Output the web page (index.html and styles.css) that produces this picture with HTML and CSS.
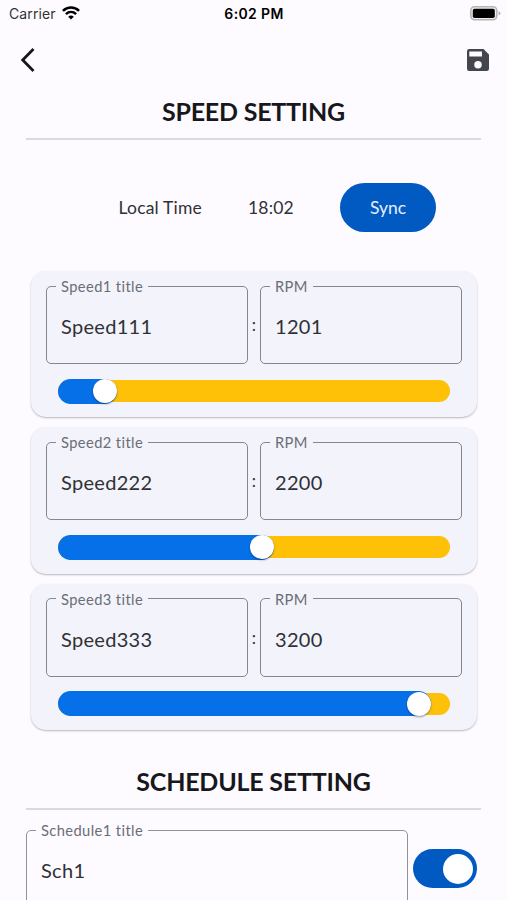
FILE: index.html
```html
<!DOCTYPE html>
<html lang="en">
<head>
<meta charset="utf-8">
<title>Speed Setting</title>
<link rel="stylesheet" href="styles.css">
</head>
<body>
<div class="status">
  <div class="carrier"><span>Carrier</span>
    <svg width="18" height="14" viewBox="0 0 18 14" fill="none" stroke="#000" stroke-width="2.5"><path d="M.9 4.9C5.6.4 12.4.4 17.1 4.9M3.900 8.100c3-2.800 7.200-2.800 10.200 0"/><path d="M9 13.600 6.200 10.700c1.700-1.500 3.900-1.500 5.600 0z" fill="#000" stroke="none"/></svg>
  </div>
  <div class="clock">6:02 PM</div>
  <svg class="battery" width="31" height="15" viewBox="0 0 31 15"><rect x=".8" y=".8" width="26" height="13" rx="3.8" fill="#eee" stroke="#b5b5b5" stroke-width="1.6"/><rect x="2.800" y="2.800" width="22" height="9.200" rx="1.800" fill="#000"/><path d="M28.600 5.200q1.800.7 1.800 2.100t-1.800 2.100z" fill="#aaa"/></svg>
</div>
<header class="toolbar">
  <svg width="16" height="26" viewBox="0 0 16 26" fill="none" stroke="#17181b" stroke-width="2.8"><path d="M13.5 2 2.700 13 13.500 24"/></svg>
  <svg class="save" width="24" height="24" viewBox="0 0 24 24"><path fill="#44464f" fill-rule="evenodd" d="M3.200 1h14.300L23 6.500v14.300a2.200 2.200 0 0 1-2.200 2.200H3.200A2.200 2.200 0 0 1 1 20.800V3.200A2.200 2.200 0 0 1 3.200 1zM3.300 3.400v5h12.700v-5zM12 13a3.750 3.750 0 1 0 0 7.500 3.750 3.750 0 0 0 0-7.500z"/></svg>
</header>
<main>
  <h1>SPEED SETTING</h1>
  <div class="sync-row"><span class="local">Local Time</span><span class="time">18:02</span><button class="sync">Sync</button></div>
  <section class="cards">
    <div class="card">
      <div class="fields"><fieldset><legend>Speed1 title</legend><span>Speed111</span></fieldset><span class="colon">:</span><fieldset><legend>RPM</legend><span>1201</span></fieldset></div>
      <div class="slider"><div class="active" style="width:59px"><i class="thumb"></i></div></div>
    </div>
    <div class="card">
      <div class="fields"><fieldset><legend>Speed2 title</legend><span>Speed222</span></fieldset><span class="colon">:</span><fieldset><legend>RPM</legend><span>2200</span></fieldset></div>
      <div class="slider"><div class="active" style="width:216px"><i class="thumb"></i></div></div>
    </div>
    <div class="card">
      <div class="fields"><fieldset><legend>Speed3 title</legend><span>Speed333</span></fieldset><span class="colon">:</span><fieldset><legend>RPM</legend><span>3200</span></fieldset></div>
      <div class="slider"><div class="active" style="width:373px"><i class="thumb"></i></div></div>
    </div>
  </section>
  <h1 class="schedule-title">SCHEDULE SETTING</h1>
  <div class="schedule"><fieldset><legend>Schedule1 title</legend><span>Sch1</span></fieldset><div class="toggle"><i></i></div></div>
</main>
</body>
</html>
```

FILE: styles.css
```css
* { box-sizing: border-box; }
html { height: 900px; overflow: hidden; }
body {
  margin: 0;
  height: 900px;
  overflow: hidden;
  background: #fdfbff;
  color: #303136;
  font-family: Lato, sans-serif;
}
svg { display: block; }
.status {
  display: grid;
  grid-template-columns: 1fr auto 1fr;
  height: 28px;
  padding: 0 7px 0 9px;
  align-items: center;
  color: #000;
  font: 14px/28px Inter, sans-serif;
}
.carrier { display: flex; align-items: center; gap: 6px; color: #333; letter-spacing: 0.1px; }
.carrier svg { margin-top: -3px; }
.clock { margin-left: -1px; font-weight: 600; letter-spacing: 0.35px; }
.battery { justify-self: end; margin: -2px -1px 0 0; }
.toolbar {
  display: flex;
  align-items: center;
  justify-content: space-between;
  height: 64px;
  padding: 0 17px 0 20px;
}
main { padding: 0 26px; }
h1 {
  margin: 0;
  height: 48px;
  border-bottom: 2px solid #dadade;
  color: #17181b;
  font-size: 25px;
  font-weight: 700;
  line-height: 39px;
  letter-spacing: -0.22px;
  text-align: center;
}
.sync-row { display: flex; align-items: center; height: 49px; margin-top: 43px; padding-left: 92.500px; font-size: 17.500px; letter-spacing: 0.2px; }
.local { width: 129.500px; }
.time { width: 92px; }
.sync {
  width: 96px;
  height: 49px;
  border: 0;
  border-radius: 25px;
  padding: 0;
  background: #005ac1;
  color: #e8efff;
  font: inherit;
  letter-spacing: 0;
}
.cards { display: grid; gap: 10px; margin: 39px 5px 0 5px; }
.card {
  height: 146.300px;
  padding: 7px 15px;
  border-radius: 15px;
  background: #f3f3fb;
  box-shadow: 0 1px 2px #00000045;
}
.fields { display: flex; justify-content: space-between; }
fieldset {
  width: 202px;
  min-width: 0;
  height: 86px;
  margin: 0;
  padding: 20px 14px 0 9px;
  border: 1.4px solid #85868e;
  border-radius: 5px;
  font-size: 20px;
  line-height: 24px;
  letter-spacing: 0.3px;
}
fieldset span { display: block; padding-left: 5px; }
legend { padding: 0 5px; color: #6c6d75; font-size: 14.700px; line-height: 16px; letter-spacing: 0.4px; }
.colon { width: 12px; padding-top: 35px; text-align: center; font-size: 17px; line-height: 24px; }
.slider {
  display: flex;
  align-items: center;
  width: 392px;
  height: 22px;
  margin: 16px 0 0 12px;
  border-radius: 11px;
  background: #ffc107;
}
.active { display: flex; flex: none; align-items: center; justify-content: flex-end; height: 25px; border-radius: 12.500px; background: #0670e8; }
.thumb { width: 24px; height: 24px; border-radius: 50%; background: #fff; box-shadow: 0 1px 2px #0006; }
.schedule-title { margin-top: 32px; }
.schedule { display: flex; margin-top: 12.500px; }
.schedule fieldset { width: 382px; height: 110px; border-color: #929296; }
.toggle { display: flex; align-items: center; justify-content: flex-end; width: 64px; height: 39px; margin: 27px 0 0 5px; padding-right: 4px; border-radius: 20px; background: #005ac1; }
.toggle i { width: 30px; height: 30px; border-radius: 50%; background: #fff; }
```
